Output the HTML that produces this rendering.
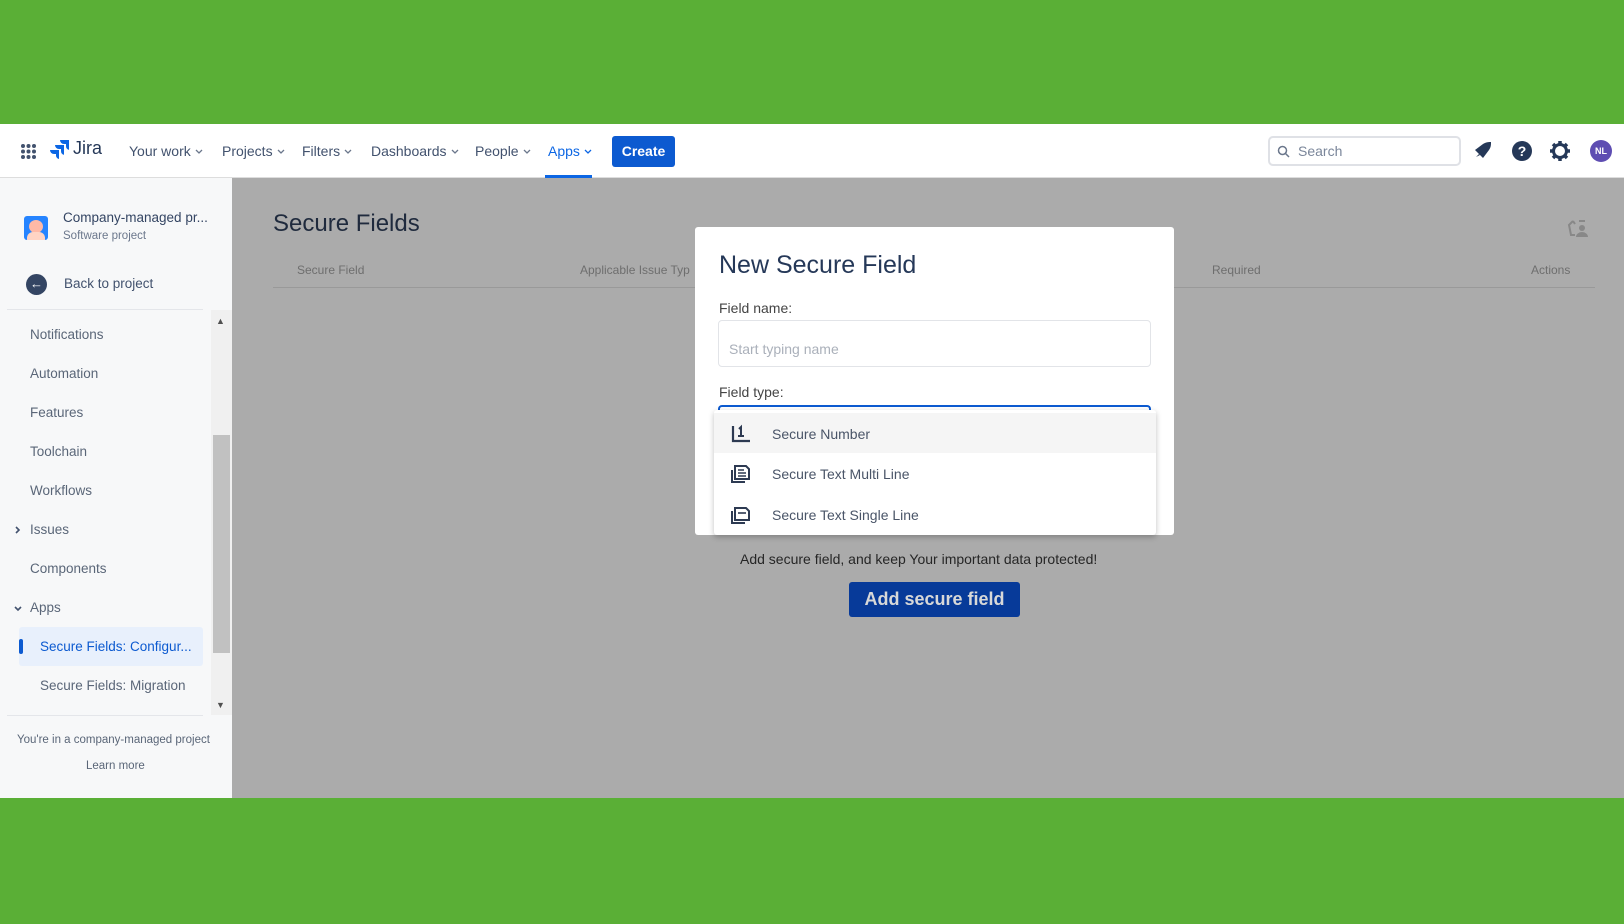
<!DOCTYPE html>
<html><head><meta charset="utf-8"><style>
*{margin:0;padding:0;box-sizing:border-box}
body{width:1624px;height:924px;background:#5aaf36;font-family:"Liberation Sans",sans-serif;position:relative;overflow:hidden;color:#172b4d}
.a{position:absolute}
.hdr{left:0;top:124px;width:1624px;height:54px;background:#fff;border-bottom:1px solid #ddd}
.nav{top:143px;font-size:14px;color:#42526e;white-space:nowrap}
.nav svg{margin-left:4px;vertical-align:2px}
.side{left:0;top:178px;width:232px;height:620px;background:#f7f8f9}
.main{left:232px;top:178px;width:1392px;height:620px;background:#ababab}
.si{left:30px;font-size:13.5px;color:#5a6678}
.th{top:263px;font-size:12px;color:#6e6e6e}
</style></head><body>
<div class="a hdr">
 <svg class="a" style="left:20px;top:19px" width="17" height="17" viewBox="0 0 17 17" fill="#42526e"><circle cx="3" cy="3" r="2"/><circle cx="8.5" cy="3" r="2"/><circle cx="14" cy="3" r="2"/><circle cx="3" cy="8.5" r="2"/><circle cx="8.5" cy="8.5" r="2"/><circle cx="14" cy="8.5" r="2"/><circle cx="3" cy="14" r="2"/><circle cx="8.5" cy="14" r="2"/><circle cx="14" cy="14" r="2"/></svg>
 <svg class="a" style="left:50px;top:15px" width="20" height="20" viewBox="0 0 20 20" fill="#0c66e4"><path d="M19 1H10a4 4 0 0 0 4 4h2v2a4 4 0 0 0 3 3.9z"/><path d="M14 6H5a4 4 0 0 0 4 4h2v2a4 4 0 0 0 3 3.9z"/><path d="M9 11H0a4 4 0 0 0 4 4h2v2a4 4 0 0 0 3 3z"/></svg>
 <div class="a" style="left:73px;top:14px;font-size:18px;color:#253858">Jira</div>
</div>
<div class="a nav" style="left:129px">Your work<svg width="8" height="5" viewBox="0 0 8 5"><path d="M1 1l3 3 3-3" fill="none" stroke="#6b778c" stroke-width="1.3"/></svg></div>
<div class="a nav" style="left:222px">Projects<svg width="8" height="5" viewBox="0 0 8 5"><path d="M1 1l3 3 3-3" fill="none" stroke="#6b778c" stroke-width="1.3"/></svg></div>
<div class="a nav" style="left:302px">Filters<svg width="8" height="5" viewBox="0 0 8 5"><path d="M1 1l3 3 3-3" fill="none" stroke="#6b778c" stroke-width="1.3"/></svg></div>
<div class="a nav" style="left:371px">Dashboards<svg width="8" height="5" viewBox="0 0 8 5"><path d="M1 1l3 3 3-3" fill="none" stroke="#6b778c" stroke-width="1.3"/></svg></div>
<div class="a nav" style="left:475px">People<svg width="8" height="5" viewBox="0 0 8 5"><path d="M1 1l3 3 3-3" fill="none" stroke="#6b778c" stroke-width="1.3"/></svg></div>
<div class="a nav" style="left:548px;color:#0c66e4">Apps<svg width="8" height="5" viewBox="0 0 8 5"><path d="M1 1l3 3 3-3" fill="none" stroke="#0c66e4" stroke-width="1.3"/></svg></div>
<div class="a" style="left:545px;top:175px;width:47px;height:3px;background:#0c66e4"></div>
<div class="a" style="left:612px;top:136px;width:63px;height:31px;background:#0c5ad0;border-radius:3px;color:#fff;font-size:14px;font-weight:bold;text-align:center;line-height:31px">Create</div>
<div class="a" style="left:1268px;top:136px;width:193px;height:30px;border:2px solid #dfe1e6;border-radius:5px;background:#fff"></div>
<svg class="a" style="left:1277px;top:145px" width="13" height="13" viewBox="0 0 13 13" fill="none" stroke="#6b778c" stroke-width="1.5"><circle cx="5.5" cy="5.5" r="4"/><path d="M8.5 8.5l3.5 3.5"/></svg>
<div class="a" style="left:1298px;top:143px;font-size:14px;color:#7a869a">Search</div>
<svg class="a" style="left:1474px;top:141px" width="18" height="18" viewBox="0 0 18 18" fill="#253858"><path d="M2 16 L5 13 L6 14z"/><path d="M1 9 L9 3 C12 1 15 1 17 1 C17 4 17 6 15 9 L9 17 z"/></svg>
<svg class="a" style="left:1511px;top:140px" width="22" height="22" viewBox="0 0 22 22"><circle cx="11" cy="11" r="10" fill="#253858"/><text x="11" y="16" text-anchor="middle" fill="#fff" font-size="14" font-weight="bold" font-family="Liberation Sans">?</text></svg>
<svg class="a" style="left:1549px;top:140px" width="22" height="22" viewBox="0 0 22 22"><circle cx="11" cy="11" r="6.5" fill="none" stroke="#253858" stroke-width="3"/><g stroke="#253858" stroke-width="3.5"><path d="M11 1v4M11 17v4M1 11h4M17 11h4M4 4l3 3M15 15l3 3M4 18l3-3M15 7l3-3"/></g><circle cx="11" cy="11" r="3" fill="#fff"/></svg>
<div class="a" style="left:1590px;top:140px;width:22px;height:22px;border-radius:50%;background:#5e4db2;color:#fff;font-size:9px;font-weight:bold;text-align:center;line-height:22px">NL</div>

<div class="a side">
 <div class="a" style="left:24px;top:38px;width:24px;height:24px;border-radius:3px;background:#2684ff;overflow:hidden"><div style="position:absolute;left:5px;top:4px;width:14px;height:13px;border-radius:50%;background:#ffb9a6"></div><div style="position:absolute;left:3px;top:16px;width:18px;height:10px;border-radius:6px 6px 0 0;background:#ffd4c4"></div></div>
 <div class="a" style="left:63px;top:32px;font-size:13.5px;color:#344563">Company-managed pr...</div>
 <div class="a" style="left:63px;top:52px;font-size:11.5px;color:#6b778c">Software project</div>
 <div class="a" style="left:26px;top:96px;width:21px;height:21px;border-radius:50%;background:#344563;color:#fff;font-size:13px;text-align:center;line-height:20px">←</div>
 <div class="a" style="left:64px;top:98px;font-size:13.5px;color:#42526e">Back to project</div>
 <div class="a" style="left:7px;top:131px;width:196px;height:1px;background:#e4e6ea"></div>
 <div class="a" style="left:7px;top:537px;width:196px;height:1px;background:#e4e6ea"></div>
 <div class="a" style="left:211px;top:132px;width:21px;height:405px;background:#f0f0f0"></div>
 <div class="a" style="left:213px;top:257px;width:17px;height:218px;background:#c1c1c1"></div>
 <div class="a" style="left:216px;top:138px;font-size:9px;color:#505050">▲</div>
 <div class="a" style="left:216px;top:522px;font-size:9px;color:#505050">▼</div>
 <div class="a" style="left:19px;top:449px;width:184px;height:39px;background:#e8f0fc;border-radius:3px"></div>
 <div class="a" style="left:19px;top:461px;width:4px;height:15px;background:#0c5ad0;border-radius:2px"></div>
 <svg class="a" style="left:15px;top:348px" width="6" height="8" viewBox="0 0 6 8"><path d="M1 1l3 3-3 3" fill="none" stroke="#42526e" stroke-width="1.6"/></svg>
 <svg class="a" style="left:14px;top:428px" width="8" height="6" viewBox="0 0 8 6"><path d="M1 1l3 3 3-3" fill="none" stroke="#42526e" stroke-width="1.6"/></svg>
 <div class="a" style="left:17px;top:556px;font-size:11.5px;color:#5a6678">You're in a company-managed project</div>
 <div class="a" style="left:86px;top:582px;font-size:11.5px;color:#5a6678">Learn more</div>
</div>
<div class="a si" style="top:327px">Notifications</div>
<div class="a si" style="top:366px">Automation</div>
<div class="a si" style="top:405px">Features</div>
<div class="a si" style="top:444px">Toolchain</div>
<div class="a si" style="top:483px">Workflows</div>
<div class="a si" style="top:522px">Issues</div>
<div class="a si" style="top:561px">Components</div>
<div class="a si" style="top:600px">Apps</div>
<div class="a si" style="left:40px;top:639px;color:#0c5ad0">Secure Fields: Configur...</div>
<div class="a si" style="left:40px;top:678px">Secure Fields: Migration</div>

<div class="a main"></div>
<div class="a" style="left:273px;top:210px;font-size:24px;color:#1f2a3d">Secure Fields</div>
<div class="a th" style="left:297px">Secure Field</div>
<div class="a th" style="left:580px">Applicable Issue Typ</div>
<div class="a th" style="left:1212px">Required</div>
<div class="a th" style="left:1531px">Actions</div>
<div class="a" style="left:273px;top:287px;width:1322px;height:1px;background:#999"></div>
<svg class="a" style="left:1567px;top:219px" width="22" height="20" viewBox="0 0 22 20" fill="#888"><path d="M6 2 L2 6 L4 16 L8 16 M6 2 L8 5" fill="none" stroke="#888" stroke-width="2"/><circle cx="15" cy="9" r="3"/><path d="M9 18 a6 5 0 0 1 12 0z"/><path d="M12 1h6v2h-6z"/></svg>
<div class="a" style="left:740px;top:551px;font-size:14px;color:#262626">Add secure field, and keep Your important data protected!</div>
<div class="a" style="left:849px;top:582px;width:171px;height:35px;background:#073a99;border-radius:3px;color:#d8d8d8;font-size:18px;font-weight:bold;text-align:center;line-height:35px">Add secure field</div>

<div class="a" style="left:695px;top:227px;width:479px;height:308px;background:#fff;border-radius:3px"></div>
<div class="a" style="left:719px;top:251px;font-size:25px;color:#253858">New Secure Field</div>
<div class="a" style="left:719px;top:300px;font-size:14px;color:#444">Field name:</div>
<div class="a" style="left:718px;top:320px;width:433px;height:47px;border:1px solid #e2e4e8;border-radius:4px"></div>
<div class="a" style="left:729px;top:341px;font-size:14px;color:#aab0ba">Start typing name</div>
<div class="a" style="left:719px;top:384px;font-size:14px;color:#444">Field type:</div>
<div class="a" style="left:718px;top:405px;width:433px;height:12px;border:2px solid #0c5ad0;border-bottom:none;border-radius:4px 4px 0 0"></div>
<div class="a" style="left:714px;top:410px;width:442px;height:125px;background:#fff;border-radius:3px;box-shadow:0 2px 6px rgba(0,0,0,.25)"></div>
<div class="a" style="left:714px;top:413px;width:442px;height:40px;background:#f5f5f5"></div>
<svg class="a" style="left:731px;top:424px" width="20" height="19" viewBox="0 0 20 19" fill="none" stroke="#2d3a52" stroke-width="2.2"><path d="M2 2v15h17"/><path d="M8 5l2-2v9M7 12h6" stroke-width="2"/></svg>
<svg class="a" style="left:730px;top:464px" width="21" height="20" viewBox="0 0 21 20" fill="none" stroke="#2d3a52" stroke-width="2"><path d="M2 6v12h13"/><path d="M5 3v12h14V5l-3-3H5z"/><path d="M8 6h6M8 9h8M8 12h8" stroke-width="1.6"/></svg>
<svg class="a" style="left:730px;top:505px" width="21" height="20" viewBox="0 0 21 20" fill="none" stroke="#2d3a52" stroke-width="2"><path d="M2 6v12h13"/><path d="M5 3v12h14V6l-3-3H5z"/><path d="M8 8h8" stroke-width="1.6"/></svg>
<div class="a" style="left:772px;top:426px;font-size:14px;color:#4a5568">Secure Number</div>
<div class="a" style="left:772px;top:466px;font-size:14px;color:#4a5568">Secure Text Multi Line</div>
<div class="a" style="left:772px;top:507px;font-size:14px;color:#4a5568">Secure Text Single Line</div>
</body></html>
